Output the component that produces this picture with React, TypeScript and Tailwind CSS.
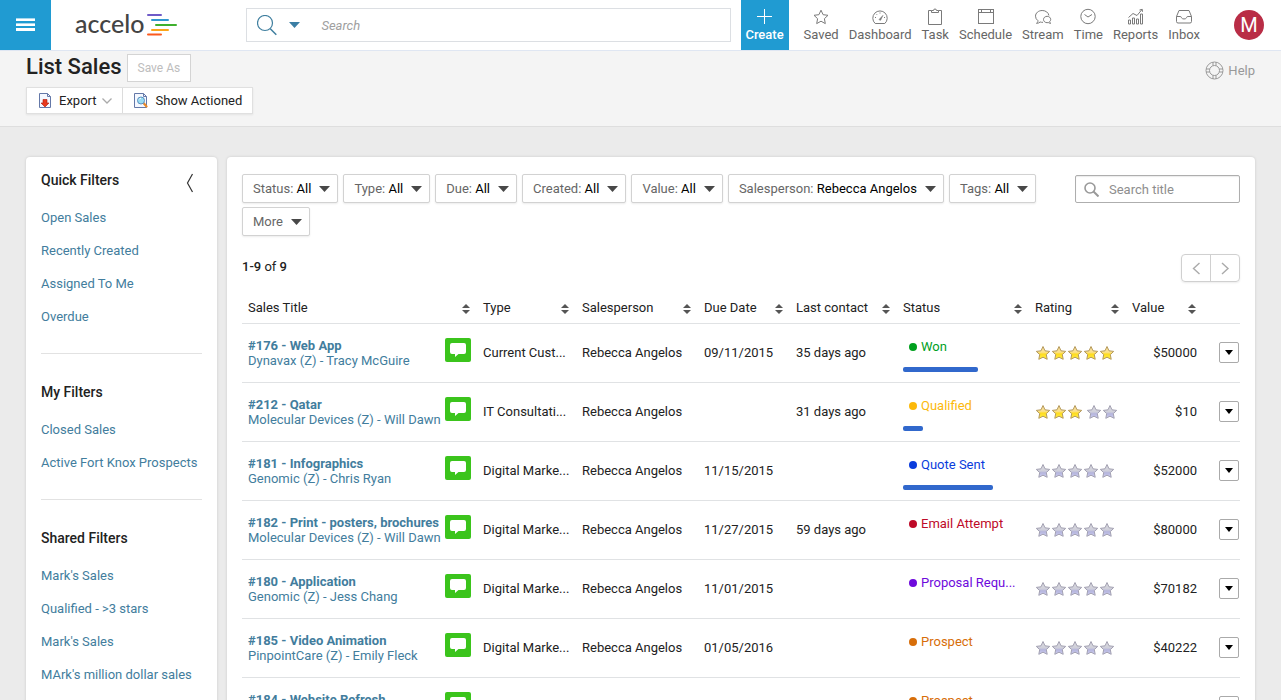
import React from "react";

type IconProps = { children: React.ReactNode };

function NavIcon({ children }: IconProps) {
  return (
    <svg width="18" height="18" viewBox="0 0 18 18" fill="none" stroke="#7a7a7a" strokeWidth="1" aria-hidden="true">
      {children}
    </svg>
  );
}

const navItems: { label: string; icon: React.ReactNode }[] = [
  {
    label: "Saved",
    icon: <path d="M9 2.200l2.100 4.500 4.900.6-3.600 3.400.9 4.900L9 13.200l-4.300 2.400.9-4.900L2 7.300l4.900-.6z" />,
  },
  {
    label: "Dashboard",
    icon: (
      <>
        <path d="M4.200 15.500a7.200 7.200 0 1 1 9.600 0z" />
        <path d="M8.200 11.300l3.800-4-2.300 4.900a1 1 0 0 1-1.500-.9z" fill="#7a7a7a" strokeWidth="0.500" />
        <path d="M9 4.500v1M4 9.500h1M13 9.500h1M5.500 6.200l.7.700" />
      </>
    ),
  },
  {
    label: "Task",
    icon: (
      <>
        <path d="M5.500 2.500H2.500v14h13v-14h-3" />
        <path d="M5.500 4.500v-2h2a1.500 1.500 0 0 1 3 0h2v2z" />
      </>
    ),
  },
  {
    label: "Schedule",
    icon: (
      <>
        <rect x="1.500" y="1.500" width="15" height="14" />
        <path d="M1.500 4.500h15M4.500 1v3M13.500 1v3" />
      </>
    ),
  },
  {
    label: "Stream",
    icon: (
      <>
        <path d="M9 14.300c-1 .1-2 0-2.800-.3-1 .9-2.200 1.300-3.700 1.300 1-.7 1.500-1.600 1.500-2.600A5.600 5.600 0 0 1 1.500 8.200c0-3.200 3-5.700 6.700-5.700 3.500 0 6.300 2.100 6.700 5" />
        <path d="M15.600 13.700c.7-.6 1.100-1.400 1.100-2.200 0-1.800-1.600-3.200-3.600-3.200S9.500 9.700 9.500 11.500s1.600 3.200 3.600 3.200c.4 0 .8-.1 1.100-.2.700.6 1.500.8 2.500.8-.6-.4-1-.9-1.100-1.600z" />
      </>
    ),
  },
  {
    label: "Time",
    icon: (
      <>
        <circle cx="9" cy="8.500" r="7.200" />
        <path d="M5.500 6.500L9 9l4-2.500" />
      </>
    ),
  },
  {
    label: "Reports",
    icon: (
      <>
        <path d="M1.500 16v-4h2v4zM5.500 16v-6h2v6zM9.500 16v-5h2v5zM13.500 16V6h2v10z" />
        <path d="M1.500 9.500l4.500-4 4 2 5-6M12.500 2l2.700-.7.300 2.500" />
      </>
    ),
  },
  {
    label: "Inbox",
    icon: (
      <>
        <path d="M1.500 8.500L4 2.500h10l2.500 6v5a1.500 1.500 0 0 1-1.500 1.500H3a1.500 1.500 0 0 1-1.500-1.500z" />
        <path d="M1.500 8.500h4.200c.4 0 .5 2.500 3.300 2.500s2.900-2.500 3.300-2.500h4.200" />
      </>
    ),
  },
];

const sidebarSections = [
  { title: "Quick Filters", links: ["Open Sales", "Recently Created", "Assigned To Me", "Overdue"] },
  { title: "My Filters", links: ["Closed Sales", "Active Fort Knox Prospects"] },
  { title: "Shared Filters", links: ["Mark's Sales", "Qualified - >3 stars", "Mark's Sales", "MArk's million dollar sales"] },
];

const filters = [
  { name: "Status:", value: "All" },
  { name: "Type:", value: "All" },
  { name: "Due:", value: "All" },
  { name: "Created:", value: "All" },
  { name: "Value:", value: "All" },
  { name: "Salesperson:", value: "Rebecca Angelos" },
  { name: "Tags:", value: "All" },
  { name: "More", value: "" },
];

const columns = [
  { label: "Sales Title", width: "w-[235px]" },
  { label: "Type", width: "w-[99px]" },
  { label: "Salesperson", width: "w-[122px]" },
  { label: "Due Date", width: "w-[92px]" },
  { label: "Last contact", width: "w-[107px]" },
  { label: "Status", width: "w-[132px]" },
  { label: "Rating", width: "w-[97px]" },
  { label: "Value", width: "w-[77px]" },
];

type Sale = {
  title: string;
  contact: string;
  type: string;
  due: string;
  last: string;
  status: string;
  color: string;
  progress: number;
  rating: number;
  value: string;
};

const sales: Sale[] = [
  { title: "#176 - Web App", contact: "Dynavax (Z) - Tracy McGuire", type: "Current Cust...", due: "09/11/2015", last: "35 days ago", status: "Won", color: "#00a01e", progress: 62.5, rating: 5, value: "$50000" },
  { title: "#212 - Qatar", contact: "Molecular Devices (Z) - Will Dawn", type: "IT Consultati...", due: "", last: "31 days ago", status: "Qualified", color: "#fcb90a", progress: 17, rating: 3, value: "$10" },
  { title: "#181 - Infographics", contact: "Genomic (Z) - Chris Ryan", type: "Digital Marke...", due: "11/15/2015", last: "", status: "Quote Sent", color: "#0a3cdc", progress: 75, rating: 0, value: "$52000" },
  { title: "#182 - Print - posters, brochures", contact: "Molecular Devices (Z) - Will Dawn", type: "Digital Marke...", due: "11/27/2015", last: "59 days ago", status: "Email Attempt", color: "#be0a28", progress: 0, rating: 0, value: "$80000" },
  { title: "#180 - Application", contact: "Genomic (Z) - Jess Chang", type: "Digital Marke...", due: "11/01/2015", last: "", status: "Proposal Requ...", color: "#6e0adc", progress: 0, rating: 0, value: "$70182" },
  { title: "#185 - Video Animation", contact: "PinpointCare (Z) - Emily Fleck", type: "Digital Marke...", due: "01/05/2016", last: "", status: "Prospect", color: "#d76e0a", progress: 0, rating: 0, value: "$40222" },
  { title: "#184 - Website Refresh", contact: "", type: "", due: "", last: "", status: "Prospect", color: "#d76e0a", progress: 0, rating: 0, value: "" },
];

function Caret({ className }: { className: string }) {
  return (
    <svg width="11" height="6" viewBox="0 0 11 6" className={className} aria-hidden="true">
      <path d="M0 0h11L5.500 6z" fill="currentColor" />
    </svg>
  );
}

function SortIcon() {
  return (
    <svg width="10" height="12" viewBox="0 0 10 12" fill="#555" className="mt-0.5 shrink-0" aria-hidden="true">
      <path d="M5 1l4 4H1zM5 11L1 7h8z" />
    </svg>
  );
}

function Star({ filled }: { filled: boolean }) {
  return (
    <svg width="16" height="16" viewBox="0 0 16 16" aria-hidden="true">
      <path
        d="M8 1.500l2 4.300 4.700.6-3.400 3.200.9 4.700L8 12.200l-4.200 2.100.9-4.700L1.300 6.400 6 5.800z"
        fill={filled ? "url(#gold)" : "url(#silver)"}
        stroke={filled ? "#b59a5c" : "#a3a1b2"}
        strokeWidth="1"
        strokeLinejoin="round"
      />
    </svg>
  );
}

function Rating({ value }: { value: number }) {
  const stars = [0, 1, 2, 3, 4];
  return (
    <div className="flex" role="img" aria-label={`${value} of 5`}>
      {stars.map((i) => (
        <span key={i} className={i === value && value > 0 ? "ml-[3px]" : ""}>
          <Star filled={i < value} />
        </span>
      ))}
    </div>
  );
}

function Header() {
  return (
    <header className="flex h-[51px] items-start border-b border-[#dfe6f2] bg-white">
      <button type="button" aria-label="Menu" className="flex h-[50px] w-[51px] shrink-0 items-center justify-center bg-[#209bd2]">
        <svg width="19" height="14" viewBox="0 0 19 14" aria-hidden="true">
          <path d="M0 1.500h19M0 6.500h19M0 11.500h19" stroke="#fff" strokeWidth="3" />
          <path d="M0 .5h19M0 5.500h19" stroke="#a6d7ed" />
        </svg>
      </button>
      <a href="#home" className="ml-6 flex h-[50px] shrink-0 items-center gap-[3px]">
        <span className="-mt-1 font-[Lato,sans-serif] text-[25px] leading-8 font-medium text-[#444]">accelo</span>
        <svg width="30" height="24" viewBox="0 0 30 24" strokeWidth="2" strokeLinecap="round" aria-hidden="true">
          <path d="M1 2h13" stroke="#6f5bc8" />
          <path d="M5 7h16" stroke="#2f97d0" />
          <path d="M9 12h20" stroke="#3fb02e" />
          <path d="M5 17h16" stroke="#fba51a" />
          <path d="M1 21.500h13" stroke="#fb5a1e" />
        </svg>
      </a>
      <form className="mt-2 ml-[69px] mr-2.5 flex h-[34px] min-w-0 flex-1 items-center border border-[#dcdfe3] pl-2.5">
        <svg width="20" height="21" viewBox="0 0 20 21" fill="none" stroke="#3f7f9f" aria-hidden="true">
          <circle cx="8" cy="8" r="7.500" strokeWidth="1.200" />
          <path d="M13.300 13.800l6 6" strokeWidth="1.500" />
        </svg>
        <button type="button" aria-label="Search scope" className="ml-3 shrink-0 text-[#3b7ea4]">
          <Caret className="block" />
        </button>
        <input aria-label="Search" placeholder="Search" className="mt-px ml-[21px] min-w-0 flex-1 bg-transparent text-[13px] italic outline-none placeholder:text-[#a0a0a0]" />
      </form>
      <button type="button" className="flex h-[50px] w-12 shrink-0 flex-col items-center gap-px bg-[#209bd2] pt-2 text-[13px] leading-4 font-medium text-white">
        <svg width="18" height="18" viewBox="0 0 18 18" stroke="#fff" aria-hidden="true">
          <path d="M8.500 1v15M1 8.500h15" />
        </svg>
        Create
      </button>
      <nav className="ml-[15px] flex shrink-0 gap-2.5">
        {navItems.map((item) => (
          <a key={item.label} href={`#${item.label.toLowerCase()}`} className="flex flex-col items-center gap-px pt-2 text-[13px] leading-4 text-[#666]">
            <NavIcon>{item.icon}</NavIcon>
            {item.label}
          </a>
        ))}
      </nav>
      <button type="button" aria-label="Account" className="mt-2.5 mr-[17px] ml-[34px] h-[30px] w-[30px] shrink-0 rounded-full bg-[#b92d46] text-[20px] leading-[30px] text-white">
        M
      </button>
    </header>
  );
}

function Toolbar() {
  return (
    <div className="flex h-[76px] items-start justify-between border-b border-[#dedede] bg-[#f4f4f4] px-[26px]">
      <div>
        <div className="flex items-start gap-[5px] pt-[3px]">
          <h1 className="mt-px text-[22px] leading-6 font-medium text-[#222]">List Sales</h1>
          <button type="button" className="h-7 border border-[#d4d4d4] bg-white px-2.5 text-[12px] text-[#bdbdbd]">
            Save As
          </button>
        </div>
        <div className="mt-[5px] inline-flex h-[27px] border border-[#e0e0e0] bg-white text-[13px] text-[#222] shadow-[0_1px_2px_rgba(0,0,0,0.07)]">
          <button type="button" className="flex items-center border-r border-[#dcdcdc] pr-2.5 pl-[11px]">
            <svg width="14" height="15" viewBox="0 0 14 15" aria-hidden="true">
              <path d="M1.500.5h8l3 3v11h-11z" fill="#f5f8ff" stroke="#6478a8" />
              <path d="M9.500.5v3h3" fill="none" stroke="#6478a8" />
              <path d="M5 6.500h4V10h2l-4 4-4-4h2z" fill="#e8391c" stroke="#a8180a" strokeWidth=".6" />
            </svg>
            <span className="ml-[7px]">Export</span>
            <svg width="10" height="6" viewBox="0 0 10 6" fill="none" stroke="#aaa" className="ml-[5px]" aria-hidden="true">
              <path d="M.5.5L5 5 9.500.5" strokeWidth="1.300" />
            </svg>
          </button>
          <button type="button" className="flex items-center pr-2.5 pl-[11px]">
            <svg width="14" height="15" viewBox="0 0 14 15" aria-hidden="true">
              <path d="M.5.5h9l3 3v11H.5z" fill="#f5f8ff" stroke="#6478a8" />
              <path d="M9.500.5v3h3" fill="none" stroke="#6478a8" />
              <path d="M10 10.500l2.500 3" stroke="#e88a2a" strokeWidth="2.200" strokeLinecap="round" />
              <circle cx="7" cy="7.500" r="3.500" fill="#9adcf2" stroke="#5a8fc0" />
              <path d="M5 6.500A2.500 2.500 0 0 1 7 5.200" stroke="#fff" fill="none" />
            </svg>
            <span className="ml-2">Show Actioned</span>
          </button>
        </div>
      </div>
      <a href="#help" className="mt-2.5 flex items-center gap-1 text-[13px] leading-[19px] text-[#999]">
        <svg width="19" height="19" viewBox="0 0 19 19" fill="none" stroke="#999" aria-hidden="true">
          <circle cx="9.500" cy="9.500" r="8.500" />
          <circle cx="9.500" cy="9.500" r="5" />
          <path d="M8 1.200v3.500M11 1.200v3.500M8 14.300v3.500M11 14.300v3.500M1.200 8h3.500M1.200 11h3.500M14.300 8h3.500M14.300 11h3.500" />
        </svg>
        Help
      </a>
    </div>
  );
}

function Sidebar() {
  return (
    <aside className="w-[191px] shrink-0 rounded-sm bg-white px-[15px] text-[13px] shadow-[0_0_3px_rgba(0,0,0,0.14)]">
      {sidebarSections.map((section, index) => (
        <section key={section.title} className={index === 0 ? "pt-[13px] pb-5" : "border-t border-[#e2e2e2] pt-7 pb-5"}>
          <div className="flex h-5 items-start justify-between">
            <h2 className="text-[14px] leading-5 font-medium whitespace-nowrap text-[#222]">{section.title}</h2>
            {index === 0 && (
              <button type="button" aria-label="Collapse filters" className="mt-[3px] mr-[7px]">
                <svg width="10" height="20" viewBox="0 0 10 20" fill="none" stroke="#333" aria-hidden="true">
                  <path d="M7.500 1L2.500 10l5 9" strokeWidth="1.200" />
                </svg>
              </button>
            )}
          </div>
          <ul className="mt-[11px]">
            {section.links.map((link, i) => (
              <li key={i} className="h-[33px] leading-[33px] whitespace-nowrap">
                <a href="#filter" className="text-[#427d9d]">{link}</a>
              </li>
            ))}
          </ul>
        </section>
      ))}
    </aside>
  );
}

function FilterBar() {
  return (
    <div className="flex items-start justify-between gap-5">
      <div className="flex flex-wrap gap-x-[5px] gap-y-1">
        {filters.map((filter) => (
          <button
            key={filter.name}
            type="button"
            aria-haspopup="listbox"
            className="flex h-[29px] items-center rounded-xs border border-[#d2d2d2] bg-white pr-[7px] pl-2.5 text-[13px] text-[#666] shadow-[0_1px_2px_rgba(0,0,0,0.08)]"
          >
            <span>
              {filter.name}
              {filter.value && <span className="text-black"> {filter.value}</span>}
            </span>
            <Caret className="ml-2 text-[#484848]" />
          </button>
        ))}
      </div>
      <label className="mt-px flex h-7 w-[165px] shrink-0 items-center rounded-xs border border-[#aeaeae] pl-2 shadow-[inset_0_1px_1px_rgba(0,0,0,0.08)]">
        <svg width="15" height="15" viewBox="0 0 15 15" fill="none" stroke="#999" className="shrink-0" aria-hidden="true">
          <circle cx="6" cy="6" r="5" strokeWidth="1.600" />
          <path d="M9.500 9.500l5 5" strokeWidth="2" />
        </svg>
        <input aria-label="Search title" placeholder="Search title" className="mt-px ml-2.5 w-full min-w-0 bg-transparent text-[13px] outline-none placeholder:text-[#8e8e8e]" />
      </label>
    </div>
  );
}

function Pager() {
  return (
    <div className="mt-[18px] flex h-7 items-start justify-between text-[13px] text-[#222]">
      <p className="leading-[26px]">
        <span className="font-medium">1-9</span> of <span className="font-medium">9</span>
      </p>
      <div className="flex h-7 divide-x divide-[#d0d0d0] rounded-sm border border-[#d0d0d0] shadow-[0_1px_2px_rgba(0,0,0,0.08)]">
        <button type="button" aria-label="Previous page" className="flex w-[29px] items-center justify-center">
          <svg width="9" height="13" viewBox="0 0 9 13" fill="none" stroke="#aaa" strokeWidth="1.400" aria-hidden="true">
            <path d="M7.500 1L1.500 6.500l6 5.500" />
          </svg>
        </button>
        <button type="button" aria-label="Next page" className="flex w-7 items-center justify-center">
          <svg width="9" height="13" viewBox="0 0 9 13" fill="none" stroke="#aaa" strokeWidth="1.400" aria-hidden="true">
            <path d="M1 1l6 5.500L1 12" />
          </svg>
        </button>
      </div>
    </div>
  );
}

function SalesRow({ sale }: { sale: Sale }) {
  const cell = "h-[59px] border-b border-[#e0e2e4] px-1.5 whitespace-nowrap";
  return (
    <tr>
      <td className={cell}>
        <div className="flex h-[30px] items-start justify-between">
          <div className="leading-[15px] text-[#427d9d]">
            <a href="#sale" className="block font-bold">{sale.title}</a>
            <a href="#contact" className="block">{sale.contact}</a>
          </div>
          <button type="button" aria-label="Send message" className="shrink-0">
            <svg width="26" height="24" viewBox="0 0 26 24" aria-hidden="true">
              <rect width="26" height="24" rx="2" fill="#3bc41c" />
              <path d="M7 5h12a2 2 0 0 1 2 2v7a2 2 0 0 1-2 2h-5.500L10 19v-3H7a2 2 0 0 1-2-2V7a2 2 0 0 1 2-2z" fill="#fff" />
            </svg>
          </button>
        </div>
      </td>
      <td className={cell}>{sale.type}</td>
      <td className={cell}>{sale.type && "Rebecca Angelos"}</td>
      <td className={cell}>{sale.due}</td>
      <td className={cell}>{sale.last}</td>
      <td className={cell}>
        <div className="flex flex-col gap-3 pt-1">
          <div className="flex items-center gap-1 pl-1.5 leading-4" style={{ color: sale.color }}>
            <span className="h-2 w-2 shrink-0 rounded-full bg-current" />
            {sale.status}
          </div>
          <div className="h-[5px]">
            <div className="h-[5px] rounded-xs bg-[#3168cc]" style={{ width: `${sale.progress}%` }} />
          </div>
        </div>
      </td>
      <td className={cell}><Rating value={sale.rating} /></td>
      <td className="h-[59px] border-b border-[#e0e2e4] px-1.5 text-right">{sale.value}</td>
      <td className="h-[59px] border-b border-[#e0e2e4] pr-px pb-px">
        <button type="button" aria-label="Row actions" className="ml-auto flex h-[21px] w-5 items-center justify-center rounded-xs border border-[#aaa] text-black">
          <svg width="8" height="5" viewBox="0 0 8 5" aria-hidden="true">
            <path d="M0 0h8L4 5z" fill="currentColor" />
          </svg>
        </button>
      </td>
    </tr>
  );
}

function SalesTable() {
  return (
    <table className="mt-[11px] w-full table-fixed border-separate border-spacing-0 text-[13px] text-[#222]">
      <thead>
        <tr>
          {columns.map((column) => (
            <th key={column.label} scope="col" className={`${column.width} h-[31px] border-b border-[#e0e2e4] px-1.5 font-normal`}>
              <button type="button" className="flex w-full items-center justify-between whitespace-nowrap">
                {column.label}
                <SortIcon />
              </button>
            </th>
          ))}
          <th scope="col" aria-label="Actions" className="w-[37px] border-b border-[#e0e2e4]" />
        </tr>
      </thead>
      <tbody>
        {sales.map((sale) => (
          <SalesRow key={sale.title} sale={sale} />
        ))}
      </tbody>
    </table>
  );
}

export default function App() {
  return (
    <div className="flex min-h-screen flex-col bg-[#ebebeb] font-[Roboto,sans-serif]">
      <svg width="0" height="0" className="absolute" aria-hidden="true">
        <defs>
          <linearGradient id="gold" x1="0" y1="0" x2="0" y2="1">
            <stop offset="0" stopColor="#f7dfa0" />
            <stop offset="0.450" stopColor="#fbe08a" />
            <stop offset="0.600" stopColor="#ffdc1e" />
            <stop offset="1" stopColor="#fff04a" />
          </linearGradient>
          <linearGradient id="silver" x1="0" y1="0" x2="0" y2="1">
            <stop offset="0" stopColor="#dcdce0" />
            <stop offset="0.500" stopColor="#cfcfda" />
            <stop offset="0.650" stopColor="#b4b4dc" />
            <stop offset="1" stopColor="#d0d0f4" />
          </linearGradient>
        </defs>
      </svg>
      <Header />
      <Toolbar />
      <div className="flex flex-1 gap-2.5 px-[26px] pt-[30px]">
        <Sidebar />
        <main className="min-w-0 flex-1 rounded-sm bg-white px-[15px] pt-[17px] shadow-[0_0_3px_rgba(0,0,0,0.14)]">
          <FilterBar />
          <Pager />
          <SalesTable />
        </main>
      </div>
    </div>
  );
}
